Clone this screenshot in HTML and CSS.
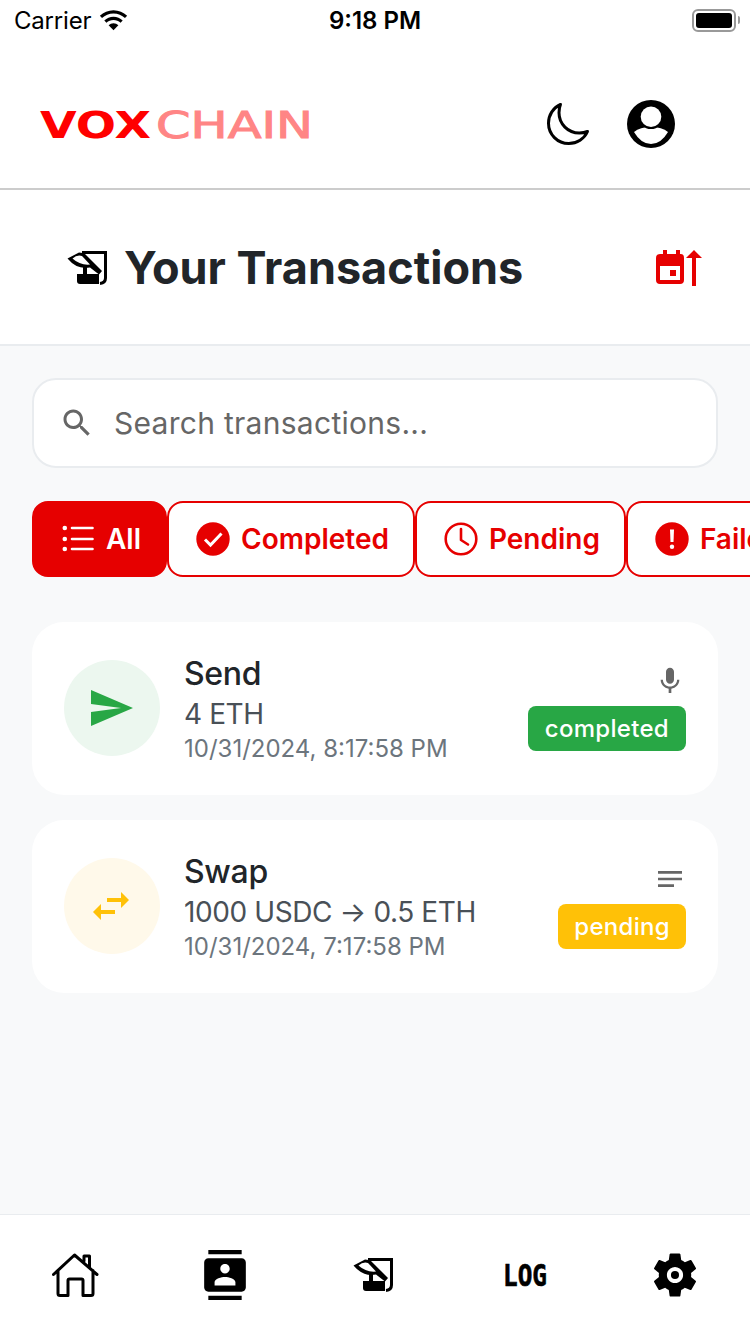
FILE: index.html
```html
<!DOCTYPE html>
<html lang="en">
<head>
<meta charset="utf-8">
<title>Your Transactions</title>
<link rel="stylesheet" href="styles.css">
</head>
<body>
<svg class="defs" width="0" height="0" aria-hidden="true">
  <symbol id="tx" viewBox="0 0 40 34">
    <path d="M15 1.500H38.500V27Q38.500 32 33 32.500" fill="none" stroke="currentColor" stroke-width="3"/>
    <path d="M10 23H32V33H13Q10 33 10 30Z" fill="currentColor"/>
    <path d="M16 15h4v9h-4z" fill="currentColor"/>
    <path d="M0.500 7.500L12 1.500Q16 1.500 18 3L35 20L32 23.500L23 16.500Q10 19 0.500 7.500Z" fill="currentColor"/>
    <path d="M5.500 7.500Q10 3.500 15 5L23 13.500Q13 14.500 5.500 7.500Z" fill="#fff"/>
  </symbol>
</svg>

<div class="status">
  <div class="status-left">
    <span class="carrier">Carrier</span>
    <svg class="wifi" viewBox="0 0 30 22"><path d="M15 4.200c4.300 0 8.200 1.700 11.100 4.400l2.100-2.200C24.700 3.100 20 1 15 1S5.300 3.100 1.800 6.400l2.100 2.200C6.800 5.900 10.700 4.200 15 4.200z"/><path d="M15 10.500c2.600 0 5 1 6.800 2.700l2.100-2.300C21.500 8.700 18.400 7.300 15 7.300s-6.500 1.400-8.900 3.600l2.100 2.300c1.800-1.700 4.200-2.700 6.800-2.700z"/><path d="M15 13.600c-1.800 0-3.400.7-4.700 1.900L15 20.500l4.700-5c-1.300-1.200-2.900-1.900-4.700-1.900z"/></svg>
  </div>
  <span class="clock">9:18 PM</span>
  <div class="battery"><span class="battery-body"><span class="battery-fill"></span></span><span class="battery-cap"></span></div>
</div>

<header class="topbar">
  <svg class="logo" viewBox="0 0 270 28" role="img" aria-label="VOXCHAIN">
    <text class="logo-vox" x="0" y="28" textLength="111" lengthAdjust="spacingAndGlyphs">VOX</text>
    <text class="logo-chain" x="116" y="28" textLength="157" lengthAdjust="spacingAndGlyphs">CHAIN</text>
  </svg>
  <div class="topbar-actions">
    <svg class="icon48" viewBox="0 0 512 512"><path d="M160 136c0-30.620 4.510-61.610 16-88C99.570 81.270 48 159.320 48 248c0 119.290 96.710 216 216 216 88.680 0 166.730-51.570 200-128-26.390 11.490-57.380 16-88 16-119.290 0-216-96.710-216-216z" fill="none" stroke="#000" stroke-width="32" stroke-linejoin="round"/></svg>
    <svg class="icon48" viewBox="0 0 48 48"><circle cx="24" cy="24" r="24" fill="#000"/><path d="M7 32Q13 27 24 27Q35 27 41 32Q34 44 24 44Q14 44 7 32Z" fill="#fff"/><circle cx="24" cy="16.700" r="12.400" fill="#000"/><circle cx="24" cy="16.700" r="10.300" fill="#fff"/></svg>
  </div>
</header>

<section class="titlebar">
  <div class="title-group">
    <svg class="tx-icon"><use href="#tx"/></svg>
    <h1 class="title">Your Transactions</h1>
  </div>
  <svg class="sort-icon" viewBox="0 0 46 36">
    <path fill-rule="evenodd" fill="#e60000" d="M4 4H7V0H11V4H20V0H24V4H25Q28 4 28 8V30Q28 34 24 34H4Q0 34 0 30V8Q0 4 4 4ZM4 16V30H24V16ZM14 20H20V26H14Z"/>
    <path fill="#e60000" d="M38 0L46 8H40V36H36V8H30Z"/>
  </svg>
</section>

<main class="content">
  <div class="search">
    <svg class="search-icon" viewBox="0 0 24 24"><path d="M15.500 14h-.79l-.28-.27C15.410 12.590 16 11.110 16 9.500 16 5.910 13.090 3 9.500 3S3 5.910 3 9.500 5.910 16 9.500 16c1.610 0 3.090-.59 4.230-1.570l.27.28v.79l5 4.990L20.490 19l-4.990-5zm-6 0C7.010 14 5 11.990 5 9.500S7.010 5 9.500 5 14 7.010 14 9.500 11.990 14 9.500 14z"/></svg>
    <span class="search-text">Search transactions...</span>
  </div>

  <div class="chips">
    <div class="chip chip-active">
      <svg class="chip-icon" viewBox="0 0 40 40"><g stroke="#fff" stroke-width="2.600" stroke-linecap="round"><path d="M14 9H34.500M14 20H34.500M14 30H34.500"/></g><g fill="#fff"><circle cx="6.800" cy="9" r="2.300"/><circle cx="6.800" cy="20" r="2.300"/><circle cx="6.800" cy="30" r="2.300"/></g></svg>
      <span>All</span>
    </div>
    <div class="chip">
      <svg class="chip-icon" viewBox="0 0 40 40"><circle cx="20" cy="20" r="16.700" fill="#e60000"/><path d="M12 20.500L17.500 26L28.500 14.500" fill="none" stroke="#fff" stroke-width="3"/></svg>
      <span>Completed</span>
    </div>
    <div class="chip">
      <svg class="chip-icon" viewBox="0 0 40 40"><circle cx="20" cy="20" r="15.300" fill="none" stroke="#e60000" stroke-width="2.600"/><path d="M20 10V21L27 25.500" fill="none" stroke="#e60000" stroke-width="2.600" stroke-linecap="round" stroke-linejoin="round"/></svg>
      <span>Pending</span>
    </div>
    <div class="chip">
      <svg class="chip-icon" viewBox="0 0 40 40"><circle cx="20" cy="20" r="16.700" fill="#e60000"/><path d="M18 10.500H22L21.500 23H18.500Z" fill="#fff"/><circle cx="20" cy="27.800" r="2.200" fill="#fff"/></svg>
      <span>Failed</span>
    </div>
  </div>

  <article class="card">
    <div class="avatar avatar-send">
      <svg class="icon48" viewBox="0 0 24 24"><path fill="#28a745" d="M2.010 21L23 12 2.010 3 2 10l15 2-15 2z"/></svg>
    </div>
    <div class="card-text">
      <div class="card-title">Send</div>
      <div class="card-sub">4 ETH</div>
      <div class="card-date">10/31/2024, 8:17:58 PM</div>
    </div>
    <div class="card-side">
      <svg class="side-icon" viewBox="0 0 24 24"><path d="M12 14c1.660 0 2.990-1.340 2.990-3L15 5c0-1.660-1.340-3-3-3S9 3.340 9 5v6c0 1.660 1.340 3 3 3zm5.300-3c0 3-2.540 5.100-5.300 5.100S6.700 14 6.700 11H5c0 3.410 2.720 6.230 6 6.720V21h2v-3.280c3.280-.48 6-3.300 6-6.720h-1.700z"/></svg>
      <span class="badge badge-done">completed</span>
    </div>
  </article>

  <article class="card">
    <div class="avatar avatar-swap">
      <svg class="icon48" viewBox="0 0 24 24"><path fill="#ffc107" d="M6.990 11L3 15l3.990 4v-3H14v-2H6.990v-3zM21 9l-3.990-4v3H10v2h7.010v3L21 9z"/></svg>
    </div>
    <div class="card-text">
      <div class="card-title">Swap</div>
      <div class="card-sub">1000 USDC → 0.5 ETH</div>
      <div class="card-date">10/31/2024, 7:17:58 PM</div>
    </div>
    <div class="card-side">
      <svg class="side-icon" viewBox="0 0 24 24"><path d="M3 18h12v-2H3v2zM3 6v2h18V6H3zm0 7h18v-2H3v2z"/></svg>
      <span class="badge badge-pending">pending</span>
    </div>
  </article>
</main>

<nav class="tabbar">
  <div class="tab">
    <svg class="home-icon" viewBox="0 0 47 44"><path d="M1.500 21.500L22.500 2L45 21.500M6 17.500V40.500Q6 42.500 8 42.500H16V27.500Q16 26 17.500 26H29.500Q31 26 31 27.500V42.500H39Q41 42.500 41 40.500V17.500M32 8V3H37.500V14" fill="none" stroke="#000" stroke-width="3" stroke-linecap="round" stroke-linejoin="round"/></svg>
  </div>
  <div class="tab">
    <svg class="contacts-icon" viewBox="0 0 24 24"><path d="M20 0H4v2h16V0zM4 24h16v-2H4v2zM20 4H4c-1.100 0-2 .9-2 2v12c0 1.100.9 2 2 2h16c1.100 0 2-.9 2-2V6c0-1.100-.9-2-2-2zm-8 2.750c1.240 0 2.250 1.010 2.250 2.250s-1.010 2.250-2.250 2.250S9.750 10.240 9.750 9 10.760 6.750 12 6.750zM17 17H7v-1.500c0-1.670 3.330-2.500 5-2.500s5 .83 5 2.500V17z"/></svg>
  </div>
  <div class="tab">
    <svg class="tx-icon tab-tx"><use href="#tx"/></svg>
  </div>
  <div class="tab">
    <svg class="log-icon" viewBox="0 0 44 22" role="img" aria-label="LOG"><text class="log-text" x="0" y="22" textLength="44" lengthAdjust="spacingAndGlyphs">LOG</text></svg>
  </div>
  <div class="tab">
    <svg class="gear-icon" viewBox="0 0 24 24"><path d="M19.140 12.940c.04-.3.06-.61.06-.94 0-.32-.02-.64-.07-.94l2.030-1.580c.18-.14.23-.41.12-.61l-1.920-3.320c-.12-.22-.37-.29-.59-.22l-2.390.96c-.5-.38-1.030-.7-1.620-.94l-.36-2.540c-.04-.24-.24-.41-.48-.41h-3.840c-.24 0-.43.17-.47.41l-.36 2.540c-.59.24-1.130.57-1.620.94l-2.390-.96c-.22-.08-.47 0-.59.22L2.740 8.870c-.12.21-.08.47.12.61l2.030 1.580c-.05.3-.09.63-.09.94s.02.64.07.94l-2.030 1.580c-.18.14-.23.41-.12.61l1.920 3.320c.12.22.37.29.59.22l2.390-.96c.5.38 1.030.7 1.620.94l.36 2.540c.05.24.24.41.48.41h3.840c.24 0 .44-.17.47-.41l.36-2.540c.59-.24 1.130-.56 1.620-.94l2.390.96c.22.08.47 0 .59-.22l1.920-3.320c.12-.22.07-.47-.12-.61l-2.010-1.580zM12 15.600c-1.980 0-3.600-1.620-3.600-3.600s1.620-3.600 3.600-3.600 3.600 1.620 3.600 3.600-1.620 3.600-3.600 3.600z"/><circle cx="12" cy="12" r="1.800"/></svg>
  </div>
</nav>
</body>
</html>
```

FILE: styles.css
```css
* { box-sizing: border-box; margin: 0; padding: 0; }
html, body { width: 750px; height: 1334px; overflow: hidden; }
body {
  display: flex;
  flex-direction: column;
  background: #fff;
  font-family: Inter, "Liberation Sans", sans-serif;
  color: #212529;
}
svg { display: block; flex: none; }
.defs { position: absolute; }

.status {
  height: 40px;
  flex: none;
  display: flex;
  align-items: center;
  justify-content: space-between;
  padding: 0 10px 0 14px;
  color: #000;
}
.status-left { display: flex; align-items: center; gap: 7px; width: 180px; }
.carrier { font-size: 24px; letter-spacing: -0.2px; }
.wifi { width: 31px; height: 23px; fill: #000; }
.clock { font-size: 24px; font-weight: 600; }
.battery { width: 184px; display: flex; justify-content: flex-end; align-items: center; gap: 2px; }
.battery-body { width: 44px; height: 23px; border: 2px solid #999; border-radius: 6px; padding: 2px; display: block; }
.battery-fill { display: block; height: 100%; background: #000; border-radius: 3px; }
.battery-cap { width: 2px; height: 8px; background: #999; border-radius: 0 2px 2px 0; }

.topbar {
  height: 150px;
  flex: none;
  display: flex;
  align-items: center;
  justify-content: space-between;
  padding: 20px 75px 0 40px;
  border-bottom: 2px solid #ccc;
}
.logo { width: 270px; height: 28px; overflow: visible; }
.logo-vox { font-family: "DejaVu Sans", sans-serif; font-weight: 700; font-size: 38px; fill: #f00; }
.logo-chain { font-family: "DejaVu Sans", sans-serif; font-size: 38px; fill: #ff8585; stroke: #ff8585; stroke-width: 1px; }
.topbar-actions { display: flex; align-items: center; gap: 35px; }
.icon48 { width: 48px; height: 48px; }

.titlebar {
  height: 156px;
  flex: none;
  display: flex;
  align-items: center;
  justify-content: space-between;
  padding: 2px 48px 0 67px;
  border-bottom: 2px solid #e9ecef;
}
.title-group { display: flex; align-items: center; gap: 17px; }
.tx-icon { width: 40px; height: 34px; color: #000; }
.tab-tx { margin-right: 4px; }
.title { font-size: 45px; font-weight: 700; line-height: 54px; }
.sort-icon { width: 46px; height: 36px; }

.content {
  flex: 1;
  background: #f8f9fa;
  padding: 32px 32px 0;
  min-height: 0;
  overflow: hidden;
}
.search {
  height: 90px;
  display: flex;
  align-items: center;
  gap: 19px;
  padding-left: 25px;
  background: #fff;
  border: 2px solid #e9ecef;
  border-radius: 24px;
}
.search-icon { width: 36px; height: 36px; fill: #666; }
.search-text { font-size: 30px; letter-spacing: 0.28px; color: #666; }

.chips {
  display: flex;
  width: 718px;
  margin-top: 33px;
  overflow: hidden;
}
.chip {
  height: 76px;
  flex: none;
  display: flex;
  align-items: center;
  gap: 8px;
  padding: 0 24px;
  background: #fff;
  border: 2px solid #e60000;
  border-radius: 16px;
  color: #e60000;
  font-size: 28px;
  font-weight: 600;
}
.chip-active { background: #e60000; color: #fff; }
.chip-icon { width: 40px; height: 40px; }

.card {
  height: 173px;
  display: flex;
  align-items: center;
  margin-bottom: 25px;
  padding: 0 32px 1px;
  background: #fff;
  border-radius: 32px;
}
.chips + .card { margin-top: 45px; }
.avatar {
  width: 96px;
  height: 96px;
  flex: none;
  display: flex;
  align-items: center;
  justify-content: center;
  padding-right: 2px;
  border-radius: 50%;
}
.avatar-send { background: #ecf7ef; }
.avatar-swap { background: #fff9ea; }
.card-text { flex: 1; margin-left: 24px; padding-top: 3px; min-width: 0; }
.card-title { font-size: 32px; line-height: 38px; font-weight: 500; letter-spacing: -0.3px; color: #212529; }
.card-sub { font-size: 28px; line-height: 34px; margin-top: 4px; letter-spacing: -0.4px; color: #495057; }
.card-date { font-size: 24px; line-height: 30px; margin-top: 3px; color: #6c757d; }
.card-side { display: flex; flex-direction: column; align-items: flex-end; gap: 9px; margin-bottom: 1px; }
.side-icon { width: 32px; height: 32px; fill: #666; }
.badge {
  height: 45px;
  display: flex;
  align-items: center;
  border-radius: 8px;
  color: #fff;
  font-size: 24px;
  font-weight: 500;
  letter-spacing: 0.3px;
}
.badge-done { background: #28a745; padding: 0 17px; }
.badge-pending { background: #ffc107; padding: 0 16px; }

.tabbar {
  height: 120px;
  flex: none;
  display: grid;
  grid-template-columns: repeat(5, 1fr);
  align-items: center;
  border-top: 1px solid #e9ecef;
  background: #fff;
}
.tab { display: flex; justify-content: center; align-items: center; }
.home-icon { width: 47px; height: 44px; }
.contacts-icon { width: 50px; height: 50px; fill: #000; }
.log-icon { width: 44px; height: 22px; overflow: visible; }
.log-text { font-family: "DejaVu Sans Mono", monospace; font-weight: 700; font-size: 30px; fill: #000; stroke: #000; stroke-width: 0.6px; }
.gear-icon { width: 54px; height: 54px; fill: #000; }
```
